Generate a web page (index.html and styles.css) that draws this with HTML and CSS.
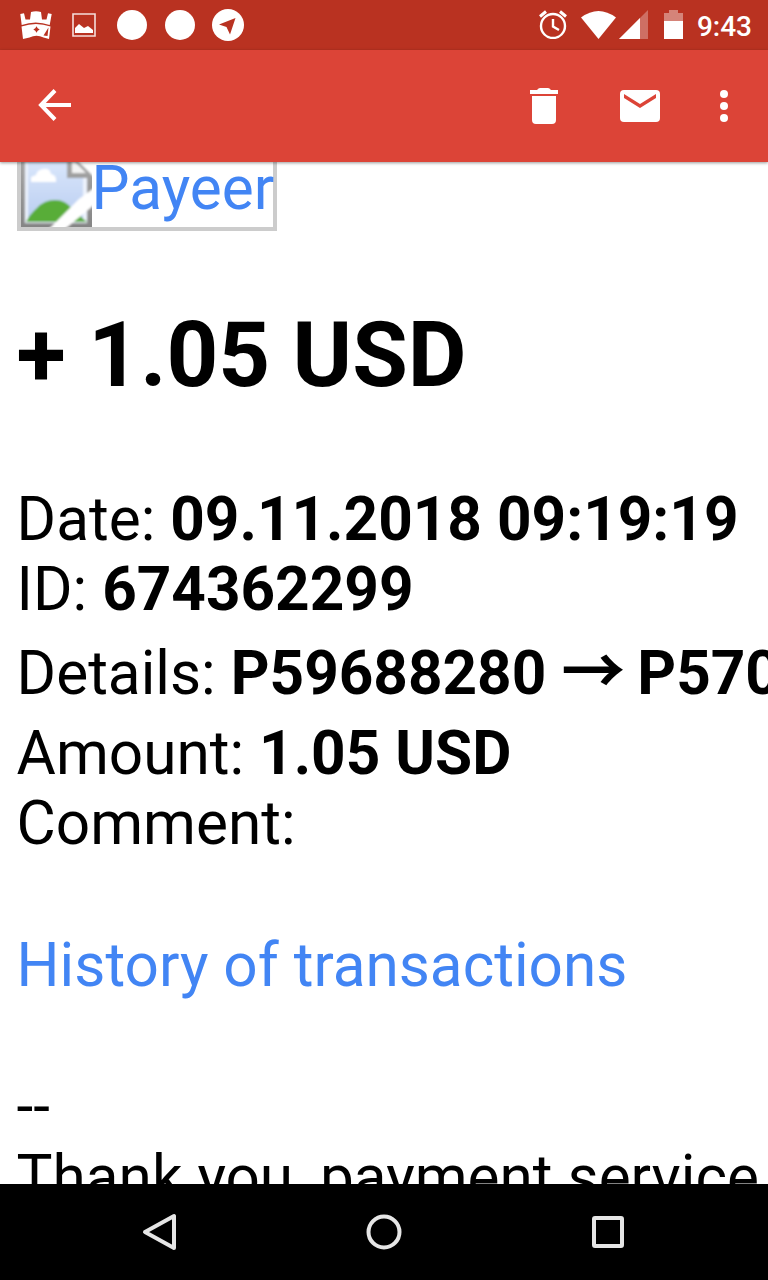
FILE: index.html
```html
<!DOCTYPE html>
<html lang="en">
<head>
    <meta charset="UTF-8">
    <meta name="viewport" content="width=device-width, initial-scale=1.0">
    <title>Payeer</title>
    <link rel="stylesheet" href="styles.css">
</head>
<body>
    <div class="status-bar">
        <div class="notifications">
            <svg width="32" height="30" viewBox="0 0 32 30" fill="#fff">
                <path d="M.3 4l3.700-.7 1.500 6.200h4.500l1-7.500q5-1.300 10 0l1 7.500h4.500l1.500-6.200 3.700.7-2 11q-14-5-28 0z"/>
                <path fill-rule="evenodd" d="M1.500 16.500q14.500-5 29 0l-1.500 12.500-5.500-1.500q-7-3.500-14 0L3 29zM16.500 16.300l-1.200 2-2 1.200 2 1.200 1.200 2 1.200-2 2-1.200-2-1.200zM28.500 17.500l-5 8 4 .5z"/>
            </svg>
            <svg width="24" height="24" viewBox="0 0 24 24">
                <path d="M1 1h22v22H1z" fill="none" stroke="#f5dedb" stroke-width="1.600"/>
                <path d="M3 20v-5l4-4 5 4 4-2 5 4v3z" fill="#fff"/>
            </svg>
            <span class="dot"></span>
            <span class="dot"></span>
            <svg width="32" height="32" viewBox="0 0 32 32">
                <circle cx="16" cy="16" r="16" fill="#fff"/>
                <path d="M23.500 9L7 15.500l7.500 2.500 3.500 7.500z" fill="#b93221"/>
            </svg>
        </div>
        <div class="system">
            <svg class="alarm" width="28" height="29" viewBox="0 0 28 29" fill="none" stroke="#fff" stroke-width="2.400">
                <circle cx="14" cy="16" r="12"/>
                <path d="M14 9v7.500l6 3.500"/>
                <path d="M1 6.500l6-5M27 6.500l-6-5" stroke-width="3"/>
            </svg>
            <svg class="wifi" width="35" height="28" viewBox="0 0 35 28" fill="#fff">
                <path d="M0 6.500Q17.500-6.500 35 6.500L17.500 28z"/>
            </svg>
            <svg class="signal" width="29" height="29" viewBox="0 0 29 29" fill="#fff">
                <path d="M29 0v29H0z" opacity=".3"/>
                <path d="M21 8v21H0z"/>
            </svg>
            <svg class="battery" width="19" height="29" viewBox="0 0 19 29" fill="#fff">
                <path d="M5 0h9v3h5v8H0V3h5z" opacity=".4"/>
                <path d="M0 11h19v18H0z"/>
            </svg>
            <span class="clock">9:43</span>
        </div>
    </div>

    <div class="toolbar">
        <svg class="back" width="33" height="33" viewBox="0 0 33 33" fill="none" stroke="#fff" stroke-width="4">
            <path d="M17 1.500l-14 14.500 14 14.500M3 16h30"/>
        </svg>
        <div class="actions">
            <svg class="trash" width="28" height="36" viewBox="0 0 28 36" fill="#fff">
                <path d="M0 2h7q1.500-2 3-2h8q1.500 0 3 2h7v4H0zM2 8h24v24q0 4-4 4H6q-4 0-4-4z"/>
            </svg>
            <svg class="mail" width="40" height="32" viewBox="0 0 40 32">
                <rect width="40" height="32" rx="4" fill="#fff"/>
                <path d="M4 4l16 10 16-10v4L20 18 4 8z" fill="#dc4437"/>
            </svg>
            <svg class="more" width="8" height="32" viewBox="0 0 8 32" fill="#fff">
                <circle cx="4" cy="4" r="4"/>
                <circle cx="4" cy="16" r="4"/>
                <circle cx="4" cy="28" r="4"/>
            </svg>
        </div>
    </div>

    <div class="message">
        <a class="logo">
            <svg width="71" height="65" viewBox="0 0 71 65">
                <defs>
                    <linearGradient id="sky" x1="0" y1="0" x2="0" y2="1">
                        <stop offset="0" stop-color="#d9e6fb"/>
                        <stop offset="1" stop-color="#b9cdf0"/>
                    </linearGradient>
                    <linearGradient id="edge" x1="0" y1="0" x2="0" y2="1">
                        <stop offset="0" stop-color="#a6a6a6"/>
                        <stop offset="1" stop-color="#858585"/>
                    </linearGradient>
                    <filter id="soft" x="0" y="0" width="1" height="1">
                        <feGaussianBlur stdDeviation=".9"/>
                    </filter>
                </defs>
                <path d="M0 0h71v65H0z" fill="url(#edge)"/>
                <g filter="url(#soft)">
                    <path d="M0 0h71v65H0z" fill="url(#edge)"/>
                    <path d="M4 0h42v16h20v45H4z" fill="#edf3fd"/>
                    <path d="M7 0h39v16h16v44H7z" fill="url(#sky)"/>
                    <path d="M51 0h3l11 11H51z" fill="#f4f4f4"/>
                    <path d="M56-2h17v17z" fill="#fff"/>
                    <path d="M10 20v-5l5-2q1-5 7-6 7-1 8 5 6 1 5 8z" fill="#fff"/>
                    <path d="M5 60q4-8 11-14 7-8 18-8t17 9l15 13z" fill="#58ad38"/>
                    <path d="M73 26v17L44 67H28L58 37z" fill="#fff"/>
                </g>
            </svg><span>Payeer</span>
        </a>
        <h1>+ 1.05 USD</h1>
        <div class="row">Date: <b>09.11.2018 09:19:19</b></div>
        <div class="row">ID: <b>674362299</b></div>
        <div class="row details">Details: <b>P59688280 <span class="arrow">→</span> P570</b></div>
        <div class="row">Amount: <b>1.05 USD</b></div>
        <div class="row">Comment:</div>
        <div class="row history"><a>History of transactions</a></div>
        <div class="row">--</div>
        <div class="row">Thank you, payment service</div>
    </div>

    <div class="nav-bar">
        <svg width="36" height="40" viewBox="0 0 36 40">
            <path d="M3 20L32 4v32z"/>
        </svg>
        <svg width="36" height="40" viewBox="0 0 36 40">
            <circle cx="18" cy="20" r="15.500"/>
        </svg>
        <svg width="36" height="40" viewBox="0 0 36 40">
            <rect x="4" y="6" width="28" height="28" rx="1"/>
        </svg>
    </div>
</body>
</html>
```
FILE: styles.css
```css
html, body {
    margin: 0;
    padding: 0;
    width: 100%;
    height: 100%;
    overflow: hidden;
    font-family: Roboto, sans-serif;
    background-color: #fff;
}
body {
    display: flex;
    flex-direction: column;
}
svg {
    display: block;
    flex: none;
}
.status-bar {
    display: flex;
    justify-content: space-between;
    align-items: center;
    flex: none;
    height: 50px;
    padding: 0 16px 0 20px;
    box-sizing: border-box;
    background: #b93221;
}
.notifications {
    display: flex;
    align-items: center;
    gap: 17px;
}
.notifications svg:nth-child(2) {
    margin: 0 4px 0 3px;
}
.dot {
    width: 30px;
    height: 30px;
    margin-right: 1px;
    border-radius: 50%;
    background: #fff;
}
.notifications svg:last-child {
    margin-left: -1px;
}
.system {
    display: flex;
    align-items: center;
}
.wifi {
    margin-left: 14px;
}
.signal {
    margin-left: 3px;
}
.battery {
    margin-left: 16px;
}
.system svg {
    margin-bottom: 1px;
}
.clock {
    margin-left: 14px;
    font-size: 28px;
    font-weight: 500;
    line-height: 50px;
    color: #fff;
    padding-top: 3px;
}
.toolbar {
    display: flex;
    justify-content: space-between;
    align-items: center;
    position: relative;
    z-index: 1;
    flex: none;
    height: 112px;
    padding: 0 40px 0 38px;
    box-sizing: border-box;
    background: #dc4437;
    box-shadow: 0 1px 3px rgba(0, 0, 0, 0.4);
}
.back {
    margin-bottom: 2px;
}
.actions {
    display: flex;
    align-items: center;
}
.mail {
    margin: 0 60px 0 62px;
}
.message {
    flex: 1;
    min-height: 0;
    overflow: hidden;
    padding-left: 16.6px;
    font-size: 60.3px;
    line-height: 70.7px;
    color: #000;
    white-space: nowrap;
}
.message a {
    color: #4285f4;
}
.message .logo {
    display: flex;
    width: 252px;
    height: 65px;
    border: 4px solid #ccc;
    border-top: 0;
}
.logo span {
    margin-top: -8px;
}
h1 {
    margin: 71px 0 76.7px;
    font-size: 90.4px;
    line-height: 106px;
    font-weight: bold;
}
.row {
    height: 70.7px;
}
.details {
    padding: 12.5px 0 9.4px;
}
.arrow {
    margin-right: -3px;
    font-family: "Noto Sans CJK JP", sans-serif;
    font-size: 64px;
    line-height: 0;
}
.history {
    padding: 70.7px 0;
}
.nav-bar {
    display: flex;
    justify-content: center;
    align-items: center;
    gap: 188px;
    flex: none;
    height: 96px;
    background: #000;
}
.nav-bar svg {
    fill: none;
    stroke: #e6e6e6;
    stroke-width: 4;
    stroke-linejoin: round;
}
```
